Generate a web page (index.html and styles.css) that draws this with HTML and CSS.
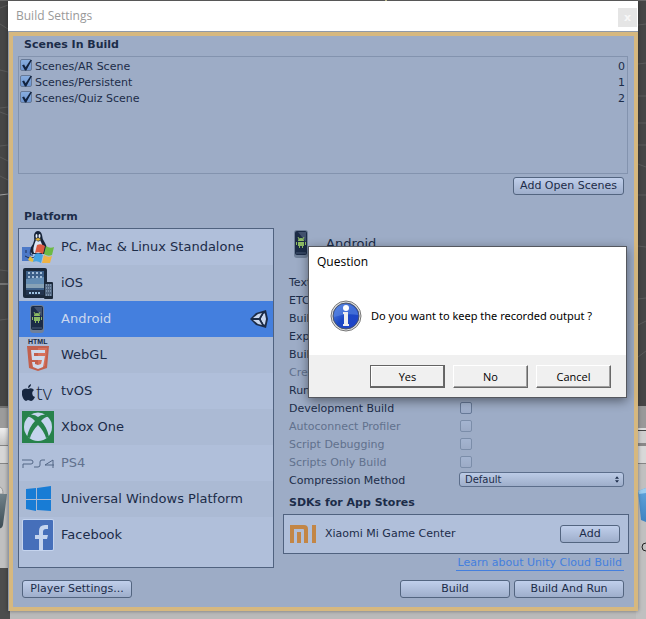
FILE: index.html
```html
<!DOCTYPE html>
<html lang="en">
<head>
<meta charset="utf-8">
<title>Build Settings</title>
<link rel="stylesheet" href="styles.css">
</head>
<body>
<svg class="backdrop" viewBox="0 0 646 619" preserveAspectRatio="none" aria-hidden="true">
  <defs>
    <linearGradient id="tab" x1="0" y1="0" x2="0" y2="1"><stop offset="0" stop-color="#f0f0f0"/><stop offset="1" stop-color="#c4c4c4"/></linearGradient>
    <linearGradient id="bin" x1="0" y1="0" x2="0" y2="1"><stop offset="0" stop-color="#71828a"/><stop offset="1" stop-color="#3d4d55"/></linearGradient>
    <linearGradient id="cube" x1="0" y1="0" x2="0" y2="1"><stop offset="0" stop-color="#62a5dc"/><stop offset="1" stop-color="#3f83c2"/></linearGradient>
  </defs>
  <rect width="646" height="619" fill="#464646"/>
  <path d="M0 8l8-3M0 24l8 5M0 70l8 2M0 108l8-1M0 112l8 3M0 146l8-1M0 157l8 4M0 176l8 4M0 270l8 1M0 320l8-1M638 25l8-1M638 64l8-1M638 96h8M638 123h8M638 145h8M638 164l8 3M638 195h8M638 246l8 1M638 299l8-1M638 325l8-4M638 357l8-6" stroke="#5b5b5b" fill="none"/>
  <path d="M0 195l8-1M0 284h8" stroke="#a0a0a0"/>
  <path d="M0 0h646" stroke="#686868" stroke-width="2"/>
  <rect x="385" width="2" height="1" fill="#e6e0a8"/>
  <g>
    <rect y="406" width="10" height="22" fill="#9c9c9c"/><rect y="406" width="10" height="2" fill="#747474"/>
    <rect y="428" width="10" height="17" fill="url(#tab)"/><rect y="445" width="10" height="1" fill="#858585"/>
    <rect y="446" width="10" height="17" fill="#d6d6d6"/><rect y="463" width="10" height="1" fill="#858585"/>
    <rect y="464" width="10" height="104" fill="#c0c0c0"/><rect y="568" width="10" height="51" fill="#4d4d4d"/>
    <path d="M0 487q3 1 3 7H0" fill="#d9d9d9" stroke="#999"/>
    <path d="M0 494h7L3 525q-1 4-3 3z" fill="url(#bin)"/>
  </g>
  <rect x="10" y="608" width="636" height="11" fill="#bababa"/>
  <g>
    <rect x="636" y="406" width="10" height="213" fill="#c0c0c0"/><rect x="636" y="406" width="10" height="22" fill="#999"/>
    <rect x="636" y="428" width="10" height="2" fill="#ddd"/><rect x="636" y="430" width="10" height="1" fill="#444"/>
    <rect x="636" y="431" width="10" height="14" fill="#cecece"/><rect x="636" y="443" width="10" height="3" fill="#888"/>
    <rect x="636" y="446" width="10" height="17" fill="#d8d8d8"/><rect x="636" y="463" width="10" height="1" fill="#858585"/>
    <path d="M638 491l8-3v34l-5-2z" fill="url(#cube)"/><path d="M638 491l8-3v5l-7 1z" fill="#9bcdf0"/>
    <path d="M646 543q-4 0-4 4t4 4" fill="none" stroke="#222"/>
  </g>
</svg>

<svg class="symbols" aria-hidden="true">
  <symbol id="android" viewBox="0 0 32 32">
    <rect x="8" y="2" width="14" height="28" rx="3" fill="#6f8099"/>
    <rect x="9" y="3" width="12" height="24" rx="2" fill="#1b2b46"/>
    <path d="M12 4h8v10z" fill="#41516d"/><path d="M10 25h10" stroke="#4b5c78"/>
    <path d="M12 13a3 3 0 0 1 6 0zM12 14h6v4h-1v2h-1v-2h-2v2h-1v-2h-1zM10 14h1v3h-1zM19 14h1v3h-1z" fill="#8cba63"/>
    <path d="M12 9l1 2M18 9l-1 2" stroke="#8cba63"/>
  </symbol>
</svg>

<main class="window">
  <header class="titlebar">
    <h1>Build Settings</h1>
    <button type="button" class="close" aria-label="Close">x</button>
  </header>

  <div class="content">
    <section class="scenes">
      <h2>Scenes In Build</h2>
      <ul class="scene-list">
        <li><label><input type="checkbox" checked>Scenes/AR Scene</label><span>0</span></li>
        <li><label><input type="checkbox" checked>Scenes/Persistent</label><span>1</span></li>
        <li><label><input type="checkbox" checked>Scenes/Quiz Scene</label><span>2</span></li>
      </ul>
      <div class="actions"><button type="button" class="btn add-scenes">Add Open Scenes</button></div>
    </section>

    <h2>Platform</h2>
    <div class="columns">
      <ul class="platforms">
        <li>
          <svg viewBox="0 0 32 32">
            <path d="M0 16h18v14H0z" fill="#4c79c8"/><path d="M9 16h9v14H9z" fill="#a6c0e8"/>
            <path d="M4 19v3M13 19v3M3 25q6 4 11 0M10 16q-3 6-1 8h2" stroke="#1d3158" fill="none"/>
            <path d="M12 4q1-4 4-4t4 4q0 4 3 8 3 5 1 11H10q-3-5 1-10 2-4 1-9z" fill="#152238"/>
            <path d="M14 9q3 3 4 0 4 7 3 13h-9q-2-4 2-13z" fill="#dce5f4"/>
            <ellipse cx="14.500" cy="5" rx="1" ry="2" fill="#e8eef8"/><ellipse cx="17.500" cy="5" rx="1" ry="2" fill="#e8eef8"/>
            <path d="M13 8l3-1 3 1-3 2z" fill="#e0b43a"/><path d="M6 29l2-4 5 5q-3 2-7-1z" fill="#e4bd3c"/>
            <path d="M15 14q4-2 8 1l-2 8q-4-3-8-1z" fill="#dc5a42"/><path d="M24 15q4 3 8 1l-2 8q-4 2-8-1z" fill="#6cba45"/>
            <path d="M13 23q4-2 8 1l-2 8q-4-3-8-1z" fill="#45a3e4"/><path d="M22 24q4 3 8 1l-2 7h-8z" fill="#efb345"/>
          </svg>PC, Mac &amp; Linux Standalone
        </li>
        <li>
          <svg viewBox="0 0 32 32">
            <rect x="1" y="1" width="24" height="30" rx="2" fill="#1b293c"/><rect x="4" y="4" width="18" height="24" fill="#3c5f88"/>
            <path d="M4 12l18-2v7H4z" fill="#638cb3"/><path d="M4 17h18v4H4z" fill="#87a2b6"/><path d="M4 23h18v5H4z" fill="#23344e"/>
            <path d="M6 6h14M6 10h14" stroke="#a5bed8" stroke-width="2" stroke-dasharray="2 2"/><path d="M7 26h12" stroke="#9cc0e0" stroke-width="2" stroke-dasharray="2 1"/>
            <rect x="22" y="15" width="9" height="17" rx="1" fill="#1c293a"/><path d="M23 17h7v12h-7z" fill="#51657f"/>
            <path d="M24 18h6M24 21h6M24 24h6M24 28h6" stroke="#a6bed5" stroke-dasharray="1 1"/>
          </svg>iOS
        </li>
        <li class="selected">
          <svg><use href="#android"/></svg>Android
          <svg class="unity" viewBox="0 0 20 20">
            <path d="M1 10L7 4 17 1l2 9-2 9-10-3z" fill="#1b2b47"/>
            <path d="M4 9l5-4 4-1-3 5zM4 11h6l3 5-4-1zM12 9l3-5 1 1 1 5-1 5-1 1-3-5z" fill="#c9d7ef"/>
            <path d="M3 10h8M11 10l4-7M11 10l4 7" stroke="#1b2b47" stroke-width="1"/>
          </svg>
        </li>
        <li>
          <svg viewBox="0 0 32 32">
            <text x="6" y="5" class="html-word">HTML</text>
            <path d="M5 7h22l-2 22-9 3-9-3z" fill="#c2604d"/><path d="M16 9h9l-2 18-7 2z" fill="#d6705a"/>
            <path d="M23 11H9l1 10h10l-1 4-3 1-3-1v-2h-3l1 5 5 2 5-2 2-11H12v-3h11z" fill="#d0dbec"/>
          </svg>WebGL
        </li>
        <li>
          <svg viewBox="0 0 32 32">
            <path d="M6 14q4-2 6 1-3 2-1 6l2 1q-2 4-4 4l-3-1-2 1q-3-1-4-6-1-5 2-6 2-1 4 0zM6 13q0-3 3-4 0 3-3 4z" fill="#172741"/>
            <text x="14" y="25" class="tv-word">tv</text>
          </svg>tvOS
        </li>
        <li>
          <svg viewBox="0 0 32 32">
            <rect width="32" height="32" fill="#27824b"/><circle cx="16" cy="16" r="14" fill="#c5d4ed"/>
            <path d="M8 4q4-1 8 2 4-3 8-2l3 2q-3-1-8 4 6 6 8 16l-3 1q-2-7-8-13-6 6-8 13l-3-1q2-10 8-16-5-5-8-4z" fill="#27824b"/>
            <path d="M10 3q3 0 6 2 3-2 6-2-6-3-12 0z" fill="#c5d4ed"/>
          </svg>Xbox One
        </li>
        <li class="muted">
          <svg viewBox="0 0 32 32"><path d="M0 13h9q2 0 2 2t-2 2H1v4M12 20h4q2 0 2-2v-3q0-2 2-2h3M32 18h-9l8-5v8" fill="none" stroke="#536685"/></svg>PS4
        </li>
        <li>
          <svg viewBox="0 0 32 32"><path d="M4 6l10-1v11H4zM15 5l14-2v13H15zM4 17h10v11L4 26zM15 17h14v11l-14-1z" fill="#187cd5"/></svg>Universal Windows Platform
        </li>
        <li>
          <svg viewBox="0 0 32 32"><rect width="32" height="32" rx="2" fill="#c5d4ee"/><rect x="1" y="1" width="30" height="30" rx="1" fill="#466fba"/><path d="M17 31V20h-4v-4h4v-4q0-6 6-6h3v4h-2q-3 0-3 3v3h5l-1 4h-4v11z" fill="#c5d4ee"/></svg>Facebook
        </li>
      </ul>

      <section class="details">
        <h3><svg><use href="#android"/></svg>Android</h3>
        <div class="option">Texture Compression</div>
        <div class="option">ETC2 fallback</div>
        <div class="option">Build System</div>
        <div class="option">Export Project</div>
        <div class="option">Build App Bundle</div>
        <div class="option muted">Create symbols.zip</div>
        <div class="option">Run Device</div>
        <div class="option"><label for="dev">Development Build</label><input id="dev" type="checkbox"></div>
        <div class="option muted"><label for="auto">Autoconnect Profiler</label><input id="auto" type="checkbox" disabled></div>
        <div class="option muted"><label for="debug">Script Debugging</label><input id="debug" type="checkbox" disabled></div>
        <div class="option muted"><label for="only">Scripts Only Build</label><input id="only" type="checkbox" disabled></div>
        <div class="option"><label for="method">Compression Method</label>
          <span class="select"><select id="method"><option>Default</option></select><svg viewBox="0 0 5 8"><path d="M0 3l2.500-3L5 3zM0 5h5L2.500 8z" fill="#1c2c49"/></svg></span>
        </div>
        <h2 class="sdk-title">SDKs for App Stores</h2>
        <div class="sdk">
          <svg viewBox="0 0 26 18"><path d="M0 0h14q4 0 4 4v14h-4V5q0-1-1-1H4v14H0zM7 7h4v11H7zM22 0h4v18h-4z" fill="#c38646"/></svg>
          <span>Xiaomi Mi Game Center</span>
          <button type="button" class="btn">Add</button>
        </div>
        <a class="learn" href="#">Learn about Unity Cloud Build</a>
      </section>
    </div>

    <footer class="footer">
      <button type="button" class="btn">Player Settings...</button>
      <button type="button" class="btn push">Build</button>
      <button type="button" class="btn">Build And Run</button>
    </footer>
  </div>

  <div class="dialog" role="dialog" aria-labelledby="question">
    <h2 id="question">Question</h2>
    <div class="message">
      <svg viewBox="0 0 32 32">
        <defs><linearGradient id="info" x1="0" y1="0" x2="1" y2="1"><stop offset="0" stop-color="#5f8ee8"/><stop offset=".5" stop-color="#1c49c4"/><stop offset="1" stop-color="#2141c9"/></linearGradient></defs>
        <circle cx="16" cy="16" r="15" fill="#e2e2e2" stroke="#777"/><circle cx="16" cy="16" r="13" fill="url(#info)" stroke="#4a5468"/>
        <path d="M4 17a12 12 0 0 1 24-2q-12-2-24 2z" fill="#5b87e3" opacity=".6"/>
        <circle cx="16" cy="8" r="3" fill="#fff"/><path d="M13 12h5v12h1v2h-6v-2h1V14h-1z" fill="#eee"/>
      </svg>
      <p>Do you want to keep the recorded output ?</p>
    </div>
    <div class="choices">
      <button type="button" class="default">Yes</button>
      <button type="button">No</button>
      <button type="button">Cancel</button>
    </div>
  </div>
</main>
</body>
</html>
```
FILE: styles.css
```css
* { box-sizing: border-box; }
body {
  margin: 0;
  padding: 1px 8px 8px;
  min-height: 100vh;
  background: #464646;
  color: #1c2c49;
  font: 11px/16px "DejaVu Sans", Verdana, sans-serif;
}
h1, h2, h3, p, ul { margin: 0; padding: 0; font-size: inherit; }
ul { list-style: none; }
button, select { font: inherit; color: inherit; }
.backdrop { position: absolute; inset: 0; width: 100%; height: 100%; }
.symbols { display: none; }

.window { position: relative; box-shadow: 0 0 4px rgba(0, 0, 0, .4); }
.titlebar {
  display: flex;
  justify-content: space-between;
  height: 30px;
  padding: 7px 1px 0 8px;
  background: #fff;
  color: #999;
}
.titlebar h1 { font: 12px/16px "Open Sans", sans-serif; }
.close {
  width: 19px;
  height: 19px;
  padding: 0;
  border: 0;
  background: #e5e5e5;
  color: #f7f7f7;
  font-weight: bold;
  line-height: 16px;
}
.content {
  padding: 5px 9px 13px;
  border: 1px solid #8f99a8;
  border-width: 1px 0 0 1px;
  background: #9dacc6;
  box-shadow: inset 0 0 0 4px #d6b87f;
}
.content h2 { margin: 0 0 3px 6px; line-height: 16px; font-weight: bold; }

.scene-list {
  min-height: 118px;
  margin-right: 1px;
  padding: 2px 2px 1px 0;
  border: 1px solid #8393ae;
}
.scene-list li { display: flex; justify-content: space-between; }
.scene-list label { display: flex; gap: 3px; }
input[type="checkbox"] {
  appearance: none;
  width: 12px;
  height: 12px;
  margin: 0 0 0 1px;
  border: 1px solid #667997;
  border-radius: 2px;
  background: linear-gradient(#aabbd8, #9cabc7);
}
input[type="checkbox"]:checked { background: linear-gradient(#88aee0, #6d94cf); }
input:checked::before {
  content: "";
  display: block;
  width: 11px;
  height: 11px;
  background: #12233f;
  clip-path: polygon(10% 48%, 28% 42%, 42% 65%, 85% 0, 100% 0, 48% 95%, 36% 95%);
}
.actions { display: flex; justify-content: flex-end; margin: 3px 5px 14px 0; }
.btn {
  height: 18px;
  min-width: 110px;
  padding: 0 4px;
  border: 1px solid #536580;
  border-radius: 3px;
  background: linear-gradient(#c0cfeb, #9eaecb);
  line-height: 16px;
  white-space: nowrap;
}
.add-scenes { padding: 0 6px; }

.columns { display: grid; grid-template-columns: 256px 1fr; gap: 9px; align-items: start; }
.platforms {
  min-height: 340px;
  border: 1px solid #50627f;
  background: #b0bfda;
  font-size: 13px;
}
.platforms li { display: flex; align-items: center; gap: 7px; height: 36px; padding: 0 4px 0 3px; }
.platforms li:nth-child(even) { background: #abbad4; }
.platforms .selected { background: #447fde; color: #cbd8ef; }
.platforms svg { width: 32px; height: 32px; flex: none; }
.platforms .unity { width: 20px; height: 20px; margin-left: auto; }
.html-word { font: 900 7px "Liberation Sans", sans-serif; fill: #172741; }
.tv-word { font: 300 20px "Open Sans", sans-serif; fill: #172741; }
.platforms .muted, .muted { color: #61718d; }

.details h3 {
  display: flex;
  gap: 8px;
  height: 46px;
  padding: 0 3px;
  font-size: 13px;
  font-weight: normal;
  line-height: 31px;
}
.details h3 svg { width: 32px; height: 32px; }
.option {
  display: grid;
  grid-template-columns: 170px 1fr;
  height: 18px;
  padding: 0 5px 0 6px;
  line-height: 18px;
}
.option input[type="checkbox"] { margin-top: 2px; }
.option input:disabled { opacity: .6; }
.select { position: relative; }
.select select {
  display: block;
  width: 100%;
  height: 15px;
  padding: 0 5px;
  appearance: none;
  border: 1px solid #5c6e8b;
  border-radius: 3px;
  background: linear-gradient(#bccbe6, #9eaeca);
  font-size: 10px;
  line-height: 13px;
}
.select svg { position: absolute; right: 5px; top: 4px; width: 4px; height: 7px; }
.content .sdk-title { margin-top: 5px; }
.sdk {
  display: flex;
  align-items: center;
  gap: 9px;
  height: 40px;
  padding: 0 8px 0 6px;
  border: 1px solid #50627f;
  background: #b0bfda;
}
.sdk svg { width: 26px; height: 18px; }
.sdk .btn { min-width: 60px; margin-left: auto; }
.learn {
  display: block;
  width: fit-content;
  margin: 1px 5px 0 auto;
  padding: 0 2px;
  border-bottom: 1px solid #447fde;
  color: #447fde;
  line-height: 15px;
  text-decoration: none;
}
.footer { display: flex; gap: 4px; margin-top: 9px; padding: 0 5px 0 4px; }
.push { margin-left: auto; }

.dialog {
  position: absolute;
  right: 11px;
  top: 245px;
  width: 319px;
  border: 1px solid #55585f;
  background: #fff;
  color: #000;
  box-shadow: 0 3px 10px rgba(0, 0, 0, .45);
  font: 12px/16px "Open Sans", sans-serif;
}
.dialog h2 { padding: 7px 8px; font-weight: normal; }
.message { display: flex; align-items: center; gap: 9px; height: 78px; padding: 0 21px; white-space: nowrap; }
.message svg { width: 32px; height: 32px; flex: none; }
.message p { font: 11px/16px "Noto Sans", sans-serif; }
.choices { display: flex; justify-content: flex-end; gap: 8px; padding: 10px 15px 9px; background: #f0f0f0; }
.choices button {
  width: 75px;
  height: 23px;
  padding: 0;
  border: 1px solid;
  border-color: #fff #696969 #696969 #fff;
  background: #f0f0f0;
  box-shadow: inset -1px -1px #a0a0a0;
  font-size: 11px;
}
.choices .default { border-color: #646464; box-shadow: inset -1px -1px #696969, inset 1px 1px #fff; }
```
